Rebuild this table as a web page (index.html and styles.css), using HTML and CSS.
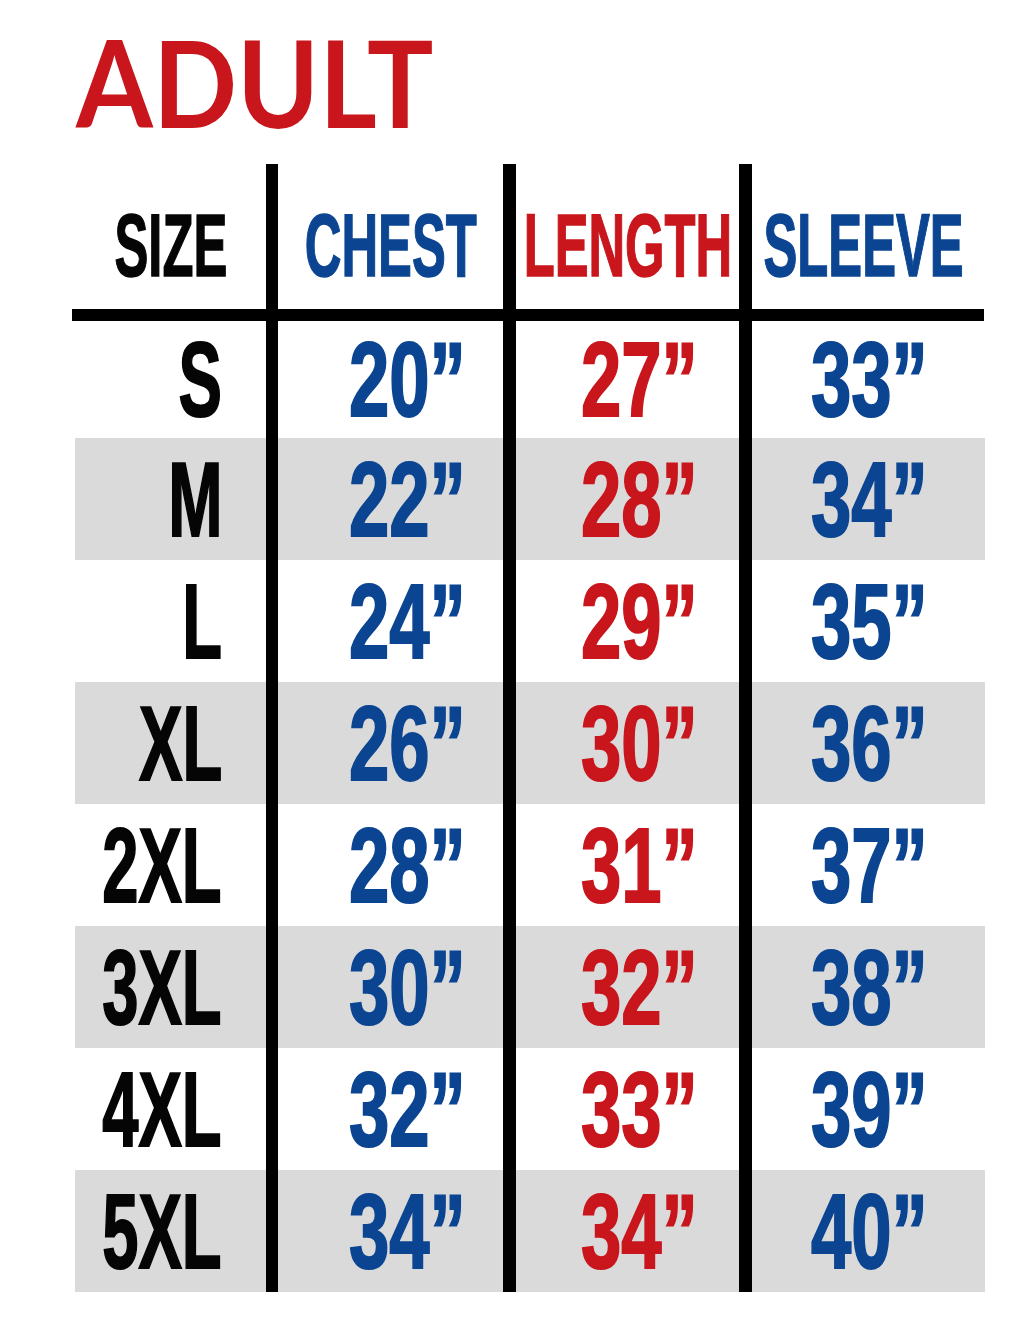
FILE: index.html
```html
<!DOCTYPE html>
<html>
<head>
<meta charset="utf-8">
<link rel="stylesheet" href="styles.css">
</head>
<body>
<div class="page">
  <h1 class="title"><span class="title-text">ADULT</span></h1>
  <div class="chart">
    <div class="row head">
      <div class="cell c1"><span class="t">SIZE</span></div><div class="div"></div>
      <div class="cell c2 blue"><span class="t">CHEST</span></div><div class="div w13"></div>
      <div class="cell c3 red"><span class="t">LENGTH</span></div><div class="div w13"></div>
      <div class="cell c4 blue"><span class="t">SLEEVE</span></div>
    </div>
    <div class="rule"></div>
    <div class="row first">
      <div class="cell c1"><span class="t">S</span></div><div class="div"></div>
      <div class="cell c2 blue"><span class="t">20”</span></div><div class="div w13"></div>
      <div class="cell c3 red"><span class="t">27”</span></div><div class="div w13"></div>
      <div class="cell c4 blue"><span class="t">33”</span></div>
    </div>
    <div class="row gray">
      <div class="cell c1"><span class="t">M</span></div><div class="div"></div>
      <div class="cell c2 blue"><span class="t">22”</span></div><div class="div w13"></div>
      <div class="cell c3 red"><span class="t">28”</span></div><div class="div w13"></div>
      <div class="cell c4 blue"><span class="t">34”</span></div>
    </div>
    <div class="row">
      <div class="cell c1"><span class="t">L</span></div><div class="div"></div>
      <div class="cell c2 blue"><span class="t">24”</span></div><div class="div w13"></div>
      <div class="cell c3 red"><span class="t">29”</span></div><div class="div w13"></div>
      <div class="cell c4 blue"><span class="t">35”</span></div>
    </div>
    <div class="row gray">
      <div class="cell c1"><span class="t">XL</span></div><div class="div"></div>
      <div class="cell c2 blue"><span class="t">26”</span></div><div class="div w13"></div>
      <div class="cell c3 red"><span class="t">30”</span></div><div class="div w13"></div>
      <div class="cell c4 blue"><span class="t">36”</span></div>
    </div>
    <div class="row">
      <div class="cell c1"><span class="t">2XL</span></div><div class="div"></div>
      <div class="cell c2 blue"><span class="t">28”</span></div><div class="div w13"></div>
      <div class="cell c3 red"><span class="t">31”</span></div><div class="div w13"></div>
      <div class="cell c4 blue"><span class="t">37”</span></div>
    </div>
    <div class="row gray">
      <div class="cell c1"><span class="t">3XL</span></div><div class="div"></div>
      <div class="cell c2 blue"><span class="t">30”</span></div><div class="div w13"></div>
      <div class="cell c3 red"><span class="t">32”</span></div><div class="div w13"></div>
      <div class="cell c4 blue"><span class="t">38”</span></div>
    </div>
    <div class="row">
      <div class="cell c1"><span class="t">4XL</span></div><div class="div"></div>
      <div class="cell c2 blue"><span class="t">32”</span></div><div class="div w13"></div>
      <div class="cell c3 red"><span class="t">33”</span></div><div class="div w13"></div>
      <div class="cell c4 blue"><span class="t">39”</span></div>
    </div>
    <div class="row gray">
      <div class="cell c1"><span class="t">5XL</span></div><div class="div"></div>
      <div class="cell c2 blue"><span class="t">34”</span></div><div class="div w13"></div>
      <div class="cell c3 red"><span class="t">34”</span></div><div class="div w13"></div>
      <div class="cell c4 blue"><span class="t">40”</span></div>
    </div>
  </div>
</div>
</body>
</html>
```

FILE: styles.css
```css
html, body {
  margin: 0;
  padding: 0;
  background: #ffffff;
}

.page {
  width: 1029px;
  height: 1340px;
  padding-top: 21px;
  box-sizing: border-box;
}

.title {
  margin: 0 0 0 76px;
  font-family: "Lato", "Liberation Sans", sans-serif;
  font-weight: 700;
  font-size: 121px;
  line-height: 121px;
  height: 121px;
  color: #c8161c;
}

.title-text {
  display: inline-block;
  transform: scaleX(0.915);
  transform-origin: left center;
}

.chart {
  margin-top: 22px;
  margin-left: 75px;
  width: 910px;
  font-family: "Liberation Sans", "Arial", sans-serif;
  font-weight: 700;
  color: #050505;
}

.row {
  display: flex;
  height: 122px;
}

.row.first {
  height: 117px;
}

.row.gray {
  background: #dadada;
}

.row.head {
  height: 145px;
}

.div {
  width: 12px;
  background: #000000;
  flex: none;
}

.div.w13 {
  width: 13px;
}

.cell {
  display: flex;
  align-items: center;
  flex: none;
  font-size: 105px;
  line-height: 1;
  box-sizing: border-box;
}

.t {
  display: inline-block;
  white-space: nowrap;
  -webkit-text-stroke: 2px currentColor;
  transform: scaleX(0.69);
  transform-origin: left center;
}

.c1 {
  width: 191px;
  justify-content: flex-end;
  padding-right: 44px;
}

.c1 .t {
  transform: scaleX(0.62);
  transform-origin: right center;
}

.c2 {
  width: 225px;
  padding-left: 71px;
}

.c3 {
  width: 223px;
  padding-left: 65px;
}

.c4 {
  width: 233px;
  padding-left: 59px;
}

.head .cell {
  font-size: 89px;
  justify-content: center;
  padding: 17px 0 0 0;
}

.head .t,
.head .c1 .t {
  -webkit-text-stroke: 1.5px currentColor;
  transform: scaleX(0.57);
  transform-origin: center center;
}

.head .c4 {
  padding-right: 10px;
}

.rule {
  height: 12px;
  width: 912px;
  margin-left: -3px;
  background: #000000;
}

.blue {
  color: #0b4592;
}

.red {
  color: #c8161c;
}
```
